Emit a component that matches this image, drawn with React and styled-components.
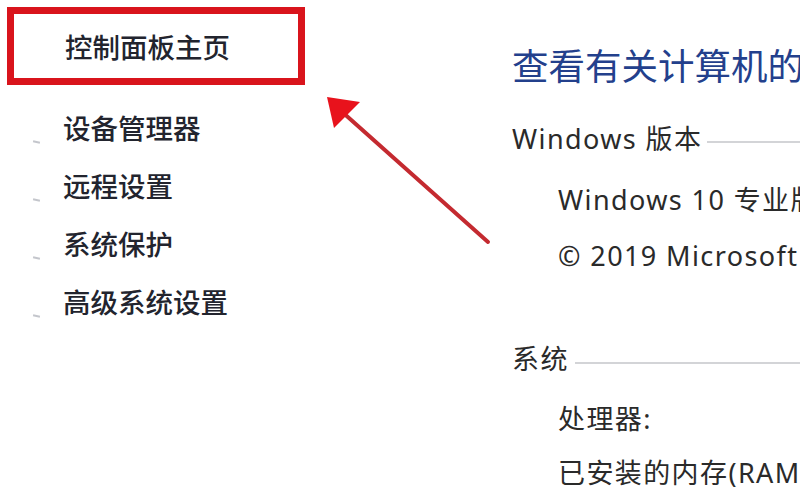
import React from 'react';
import styled, { createGlobalStyle } from 'styled-components';

const GlobalStyle = createGlobalStyle`
  html, body {
    margin: 0;
    padding: 0;
    background: #ffffff;
    overflow: hidden;
  }
  body {
    font-family: "Noto Sans", "Noto Sans CJK SC", sans-serif;
  }
`;

const Page = styled.div`
  position: relative;
  width: 800px;
  height: 500px;
  overflow: hidden;
  display: flex;
  background: #ffffff;
`;

const Sidebar = styled.nav`
  width: 512px;
  flex-shrink: 0;
  padding: 7px 0 0 7px;
  box-sizing: border-box;
  display: flex;
  flex-direction: column;
`;

const HomeLink = styled.div`
  width: 298px;
  height: 78px;
  box-sizing: border-box;
  border: 7px solid #d9141c;
  padding-left: 51px;
  display: flex;
  align-items: center;
  font-family: "Noto Sans CJK SC", sans-serif;
  font-size: 27.5px;
  font-weight: 500;
  color: #22242e;
`;

const TaskList = styled.ul`
  list-style: none;
  margin: 13px 0 0;
  padding: 0;
`;

const TaskItem = styled.li`
  height: 58px;
  display: flex;
  align-items: center;
  padding-left: 26px;
  font-family: "Noto Sans CJK SC", sans-serif;
  font-size: 27.5px;
  font-weight: 500;
  color: #22242e;
`;

const Marker = styled.span`
  width: 7px;
  height: 2px;
  margin-right: 23px;
  background: #c4c6cc;
  transform: translateY(15px) rotate(12deg);
`;

const Main = styled.main`
  flex: 1;
  display: flex;
  flex-direction: column;
  white-space: nowrap;
  padding-top: 43px;
`;

const Title = styled.h1`
  margin: 0;
  font-family: "Noto Sans CJK SC", sans-serif;
  font-weight: 400;
  font-size: 36.5px;
  line-height: 44px;
  color: #23408c;
`;

const SectionHead = styled.div`
  display: flex;
  align-items: center;
  height: 36px;
  margin-top: ${(p) => p.$gap}px;
  font-size: 27px;
  letter-spacing: 1.4px;
  color: #2a2a2a;
`;

const Rule = styled.span`
  flex: 1;
  height: 2px;
  margin: 10px 0 0 ${(p) => p.$inset}px;
  background: #d3d4d7;
`;

const InfoLine = styled.div`
  height: 58px;
  display: flex;
  align-items: center;
  padding-left: 46px;
  margin-top: ${(p) => p.$gap || 0}px;
  font-size: 27px;
  letter-spacing: 1.4px;
  color: #2a2a2a;
`;

const Overlay = styled.svg`
  position: absolute;
  top: 0;
  left: 0;
  pointer-events: none;
`;

const tasks = ['设备管理器', '远程设置', '系统保护', '高级系统设置'];

export default function App() {
  return (
    <>
      <GlobalStyle />
      <Page>
        <Sidebar>
          <HomeLink>控制面板主页</HomeLink>
          <TaskList>
            {tasks.map((t) => (
              <TaskItem key={t}>
                <Marker />
                {t}
              </TaskItem>
            ))}
          </TaskList>
        </Sidebar>

        <Main>
          <Title>查看有关计算机的</Title>

          <SectionHead $gap={32}>
            Windows 版本
            <Rule $inset={5} />
          </SectionHead>
          <InfoLine $gap={15}>Windows 10 专业版</InfoLine>
          <InfoLine>© 2019 Microsoft</InfoLine>

          <SectionHead $gap={56}>
            系统
            <Rule $inset={6} />
          </SectionHead>
          <InfoLine $gap={14}>处理器:</InfoLine>
          <InfoLine $gap={-3}>已安装的内存(RAM)</InfoLine>
        </Main>

        <Overlay width="800" height="500" viewBox="0 0 800 500">
          <line x1="488" y1="242" x2="340" y2="110" stroke="#c42a30" strokeWidth="4" strokeLinecap="round" />
          <polygon points="327,97 360,102 334,128" fill="#e8121c" />
        </Overlay>
      </Page>
    </>
  );
}
